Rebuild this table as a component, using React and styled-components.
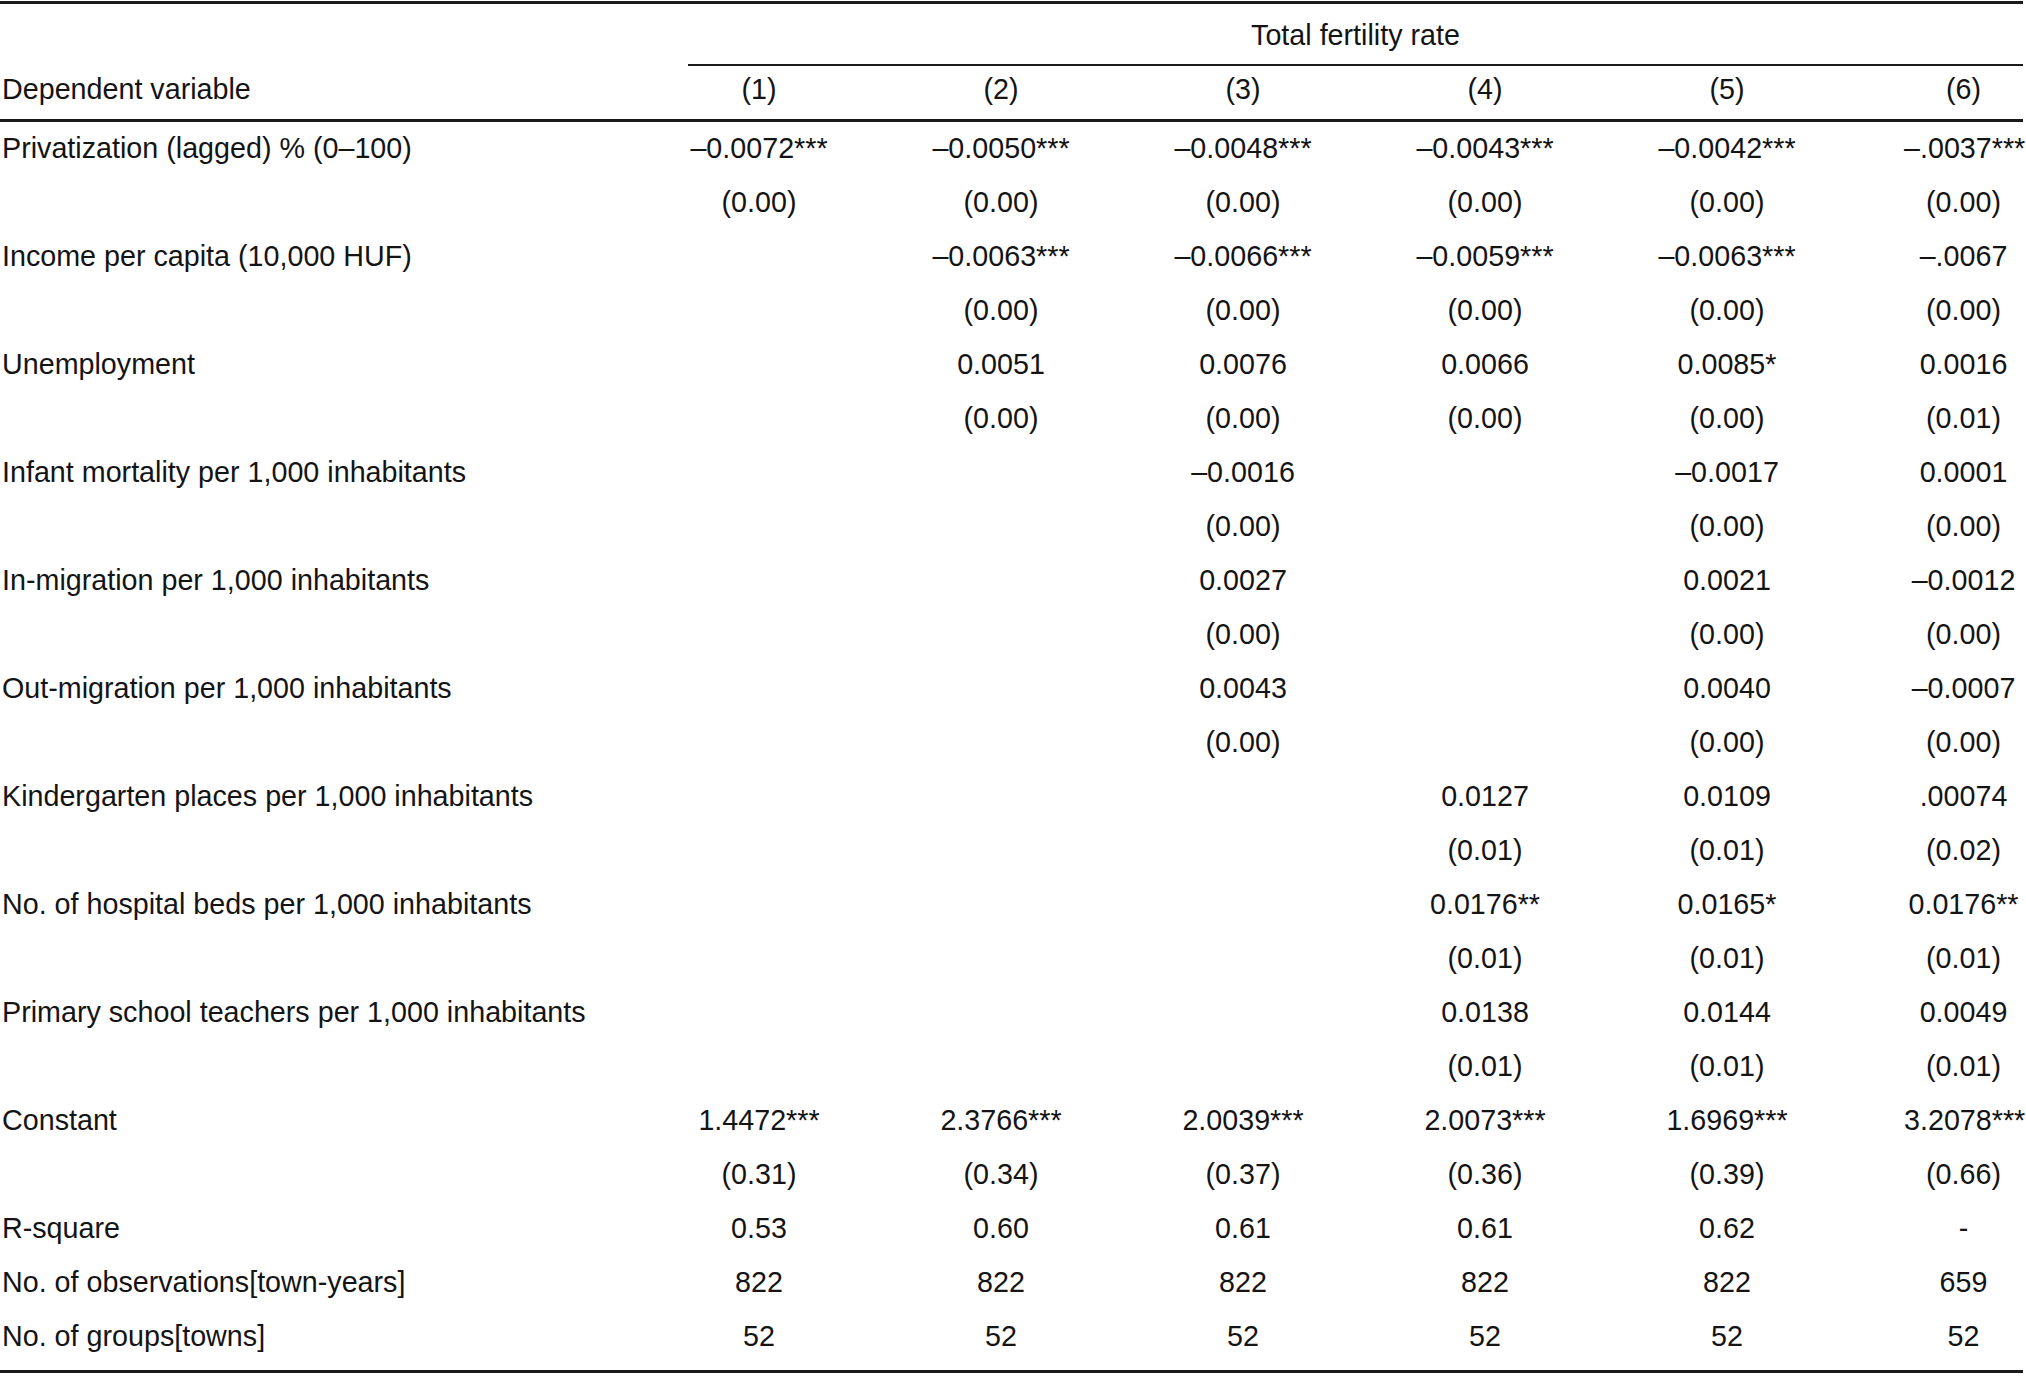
import React from 'react'
import styled, { createGlobalStyle } from 'styled-components'

const GlobalStyle = createGlobalStyle`
    html, body {
        margin: 0;
        padding: 0;
        background: #fff;
    }
    body {
        font-family: "Liberation Sans", Arial, sans-serif;
        color: #141414;
    }
`

const COLS = '638px repeat(5, 242px) 175px'

const Table = styled.div`
    width: 2023px;
    margin-top: 1px;
    border-top: 3px solid #1a1a1a;
    border-bottom: 3px solid #1a1a1a;
    padding-bottom: 6px;
    font-size: 28.7px;
    line-height: 32px;
`

const Row = styled.div`
    display: grid;
    grid-template-columns: ${COLS};
    box-sizing: border-box;
    height: ${p => p.$h}px;
    padding-top: ${p => p.$top}px;
    border-bottom: ${p => (p.$rule ? '3px solid #1a1a1a' : 'none')};
`

const Spanner = styled.div`
    grid-column: 2 / -1;
    margin-left: 50px;
    height: 62px;
    box-sizing: border-box;
    padding-top: 15px;
    text-align: center;
    border-bottom: 2px solid #1a1a1a;
`

const Label = styled.div`
    white-space: nowrap;
    padding-left: 2px;
`

const Cell = styled.div`
    text-align: center;
    white-space: nowrap;
    padding-left: ${p => (p.$last ? 56 : 0)}px;
`

const se = (pattern) => pattern.map(v => (v ? `(${v})` : ''))

const rows = [
    ['Privatization (lagged) % (0–100)', ['–0.0072***', '–0.0050***', '–0.0048***', '–0.0043***', '–0.0042***', '–.0037***']],
    ['', se(['0.00', '0.00', '0.00', '0.00', '0.00', '0.00'])],
    ['Income per capita (10,000 HUF)', ['', '–0.0063***', '–0.0066***', '–0.0059***', '–0.0063***', '–.0067']],
    ['', se(['', '0.00', '0.00', '0.00', '0.00', '0.00'])],
    ['Unemployment', ['', '0.0051', '0.0076', '0.0066', '0.0085*', '0.0016']],
    ['', se(['', '0.00', '0.00', '0.00', '0.00', '0.01'])],
    ['Infant mortality per 1,000 inhabitants', ['', '', '–0.0016', '', '–0.0017', '0.0001']],
    ['', se(['', '', '0.00', '', '0.00', '0.00'])],
    ['In-migration per 1,000 inhabitants', ['', '', '0.0027', '', '0.0021', '–0.0012']],
    ['', se(['', '', '0.00', '', '0.00', '0.00'])],
    ['Out-migration per 1,000 inhabitants', ['', '', '0.0043', '', '0.0040', '–0.0007']],
    ['', se(['', '', '0.00', '', '0.00', '0.00'])],
    ['Kindergarten places per 1,000 inhabitants', ['', '', '', '0.0127', '0.0109', '.00074']],
    ['', se(['', '', '', '0.01', '0.01', '0.02'])],
    ['No. of hospital beds per 1,000 inhabitants', ['', '', '', '0.0176**', '0.0165*', '0.0176**']],
    ['', se(['', '', '', '0.01', '0.01', '0.01'])],
    ['Primary school teachers per 1,000 inhabitants', ['', '', '', '0.0138', '0.0144', '0.0049']],
    ['', se(['', '', '', '0.01', '0.01', '0.01'])],
    ['Constant', ['1.4472***', '2.3766***', '2.0039***', '2.0073***', '1.6969***', '3.2078***']],
    ['', se(['0.31', '0.34', '0.37', '0.36', '0.39', '0.66'])],
    ['R-square', ['0.53', '0.60', '0.61', '0.61', '0.62', '-']],
    ['No. of observations[town-years]', ['822', '822', '822', '822', '822', '659']],
    ['No. of groups[towns]', ['52', '52', '52', '52', '52', '52']],
]

const Cells = ({ values }) =>
    values.map((v, i) => (
        <Cell key={i} $last={i === values.length - 1}>{v}</Cell>
    ))

export default function App() {
    return (
        <>
            <GlobalStyle />
            <Table>
                <Row $h={64} $top={0}>
                    <Label />
                    <Spanner>Total fertility rate</Spanner>
                </Row>
                <Row $h={54} $top={4.5} $rule>
                    <Label>Dependent variable</Label>
                    <Cells values={['(1)', '(2)', '(3)', '(4)', '(5)', '(6)']} />
                </Row>
                {rows.map(([label, values], i) => (
                    <Row key={i} $h={54} $top={9.5}>
                        <Label>{label}</Label>
                        <Cells values={values} />
                    </Row>
                ))}
            </Table>
        </>
    )
}
